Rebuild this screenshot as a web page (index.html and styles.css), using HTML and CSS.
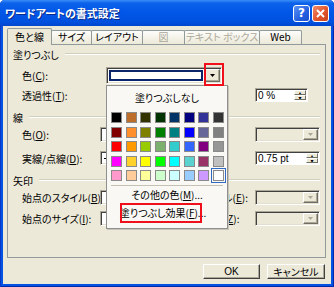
FILE: index.html
```html
<!DOCTYPE html>
<html lang="ja">
<head>
    <meta charset="UTF-8" />
    <title>ワードアートの書式設定</title>
    <link rel="stylesheet" href="styles.css">
</head>
<body>
    <div class="window">
        <div class="titlebar">
            <span class="title">ワードアートの書式設定</span>
            <span class="cap-btn cap-help">?</span>
            <span class="cap-btn cap-close">
                <svg width="9" height="9" viewBox="0 0 9 9"><path d="M1 1L8 8M8 1L1 8" stroke="#fff" stroke-width="2"/></svg>
            </span>
        </div>

        <div class="client">
            <div class="tabs">
                <span class="tab tab-1 active">色と線</span>
                <span class="tab tab-2">サイズ</span>
                <span class="tab tab-3">レイアウト</span>
                <span class="tab tab-4 disabled">図</span>
                <span class="tab tab-5 disabled">テキスト ボックス</span>
                <span class="tab tab-6">Web</span>
            </div>

            <div class="panel">
                <div class="legend legend-first"><span>塗りつぶし</span></div>
                <div class="row row-fill">
                    <span class="label label-fill">色(<u>C</u>):</span>
                    <div class="combo combo-fill">
                        <span class="combo-field focus"></span>
                        <span class="combo-btn"><svg width="5" height="3" viewBox="0 0 5 3"><path d="M0 0h5L2.5 3z"/></svg></span>
                    </div>
                </div>
                <div class="row row-alpha">
                    <span class="label">透過性(<u>T</u>):</span>
                    <div class="right">
                        <span class="right-label"></span>
                        <div class="spin spin-short">
                            <span class="spin-text">0 %</span>
                            <span class="spin-btns"><b>▴</b><b>▾</b></span>
                        </div>
                    </div>
                </div>

                <div class="legend"><span>線</span></div>
                <div class="row">
                    <span class="label">色(<u>O</u>):</span>
                    <div class="combo combo-left"><span class="combo-field"></span></div>
                    <div class="right">
                        <span class="right-label">スタイル(<u>S</u>):</span>
                        <div class="combo combo-off">
                            <span class="combo-field"></span>
                            <span class="combo-btn"><svg width="5" height="3" viewBox="0 0 5 3"><path d="M0 0h5L2.5 3z"/></svg></span>
                        </div>
                    </div>
                </div>
                <div class="row row-dash">
                    <span class="label">実線/点線(<u>D</u>):</span>
                    <div class="combo combo-left"><span class="combo-field line-preview"></span></div>
                    <div class="right">
                        <span class="right-label">太さ(<u>W</u>):</span>
                        <div class="spin">
                            <span class="spin-text">0.75 pt</span>
                            <span class="spin-btns"><b>▴</b><b>▾</b></span>
                        </div>
                    </div>
                </div>

                <div class="legend"><span>矢印</span></div>
                <div class="row">
                    <span class="label">始点のスタイル(<u>B</u>):</span>
                    <div class="combo combo-left"><span class="combo-field"></span></div>
                    <div class="right">
                        <span class="right-label">終点のスタイル(<u>E</u>):</span>
                        <div class="combo combo-off">
                            <span class="combo-field"></span>
                            <span class="combo-btn"><svg width="5" height="3" viewBox="0 0 5 3"><path d="M0 0h5L2.5 3z"/></svg></span>
                        </div>
                    </div>
                </div>
                <div class="row row-last">
                    <span class="label">始点のサイズ(<u>I</u>):</span>
                    <div class="combo combo-left"><span class="combo-field"></span></div>
                    <div class="right">
                        <span class="right-label">終点のサイズ(<u>Z</u>):</span>
                        <div class="combo combo-off">
                            <span class="combo-field"></span>
                            <span class="combo-btn"><svg width="5" height="3" viewBox="0 0 5 3"><path d="M0 0h5L2.5 3z"/></svg></span>
                        </div>
                    </div>
                </div>
            </div>

            <div class="buttons">
                <span class="btn btn-ok">OK</span>
                <span class="btn btn-cancel">キャンセル</span>
            </div>
        </div>

        <!-- colour drop-down, open over the panel -->
        <div class="popup">
            <div class="popup-none">塗りつぶしなし</div>
            <div class="palette">
                <i style="background:#000000"></i>
                <i class="dither" style="background-color:#993300"></i>
                <i style="background:#333300"></i>
                <i style="background:#003300"></i>
                <i style="background:#003366"></i>
                <i style="background:#000080"></i>
                <i style="background:#333399"></i>
                <i style="background:#333333"></i>

                <i style="background:#800000"></i>
                <i class="dither" style="background-color:#FF6600"></i>
                <i style="background:#808000"></i>
                <i style="background:#008000"></i>
                <i style="background:#008080"></i>
                <i style="background:#0000FF"></i>
                <i style="background:#666699"></i>
                <i style="background:#808080"></i>

                <i style="background:#FF0000"></i>
                <i style="background:#FF9900"></i>
                <i style="background:#99CC00"></i>
                <i class="dither" style="background-color:#339966"></i>
                <i style="background:#33CCCC"></i>
                <i style="background:#3366FF"></i>
                <i style="background:#800080"></i>
                <i style="background:#969696"></i>

                <i style="background:#FF00FF"></i>
                <i class="dither" style="background-color:#FFCC00"></i>
                <i style="background:#FFFF00"></i>
                <i style="background:#00FF00"></i>
                <i style="background:#00FFFF"></i>
                <i class="dither" style="background-color:#00CCFF"></i>
                <i style="background:#993366"></i>
                <i style="background:#C0C0C0"></i>

                <i style="background:#FF99CC"></i>
                <i style="background:#FFCC99"></i>
                <i style="background:#FFFF99"></i>
                <i style="background:#CCFFCC"></i>
                <i style="background:#CCFFFF"></i>
                <i style="background:#99CCFF"></i>
                <i style="background:#CC99FF"></i>
                <i class="selected" style="background:#FFFFFF"></i>
            </div>
            <div class="popup-sep"></div>
            <div class="popup-item item-more">その他の色(<u>M</u>)...</div>
            <div class="popup-item item-effects">塗りつぶし効果(<u>F</u>)...</div>
        </div>

        <!-- red highlight marks -->
        <div class="mark mark-arrow"></div>
        <div class="mark mark-effects"></div>
    </div>
</body>
</html>
```

FILE: styles.css
```css
* {
    box-sizing: border-box;
    margin: 0;
    padding: 0;
}

body {
    font-family: "Noto Sans CJK JP", "Noto Sans", sans-serif;
    font-size: 10px;
    font-feature-settings: "palt";
    color: #000;
    background: #fff;
}

u {
    text-decoration: underline;
    text-underline-offset: 1px;
}

.window {
    position: relative;
    width: 334px;
    height: 287px;
    background: #0553E3;
    border-radius: 5px 5px 0 0;
    overflow: hidden;
    box-shadow: inset 1px 0 0 #0838C8, inset -1px 0 0 #0028A8, inset 0 -1px 0 #0028A8;
}

/* title bar */
.titlebar {
    height: 26px;
    display: flex;
    align-items: center;
    padding: 0 5px;
    gap: 2px;
    background: linear-gradient(to bottom, #3A8DF8 0%, #0C62EA 12%, #0257E8 45%, #0050DF 85%, #0045CC 100%);
}

.title {
    margin-right: auto;
    color: #fff;
    font-size: 11px;
    font-weight: bold;
    text-shadow: 1px 1px 0 #0A2A8A;
}

.cap-btn {
    width: 17px;
    height: 17px;
    border: 1px solid #fff;
    border-radius: 3px;
    display: flex;
    align-items: center;
    justify-content: center;
    color: #fff;
}

.cap-help {
    background: linear-gradient(135deg, #5C93F5, #2460E0 60%, #1A4ED0);
    font-family: "DejaVu Sans", sans-serif;
    font-size: 12px;
    font-weight: bold;
}

.cap-close {
    background: linear-gradient(135deg, #F08C6C, #E2552C 55%, #C8411C);
}

/* dialog body */
.client {
    margin: 0 3px;
    height: 258px;
    background: #ECE9D8;
}

.tabs {
    height: 18px;
    display: flex;
    align-items: flex-end;
    padding-left: 4px;
}

.tab {
    height: 14px;
    margin-left: -1px;
    border: 1px solid #919B9C;
    border-bottom: none;
    border-radius: 2px 2px 0 0;
    background: linear-gradient(to bottom, #FDFDFB, #ECE9D8);
    text-align: center;
    line-height: 12px;
    white-space: nowrap;
}

.tab:first-child {
    margin-left: 0;
}

.tab.active {
    position: relative;
    z-index: 1;
    height: 17px;
    margin-bottom: -1px;
    background: #ECE9D8;
    line-height: 15px;
}

.tab.disabled {
    color: #ACA899;
}

.tab-1 { width: 45px; }
.tab-2 { width: 41px; }
.tab-3 { width: 52px; }
.tab-4 { width: 43px; }
.tab-5 { width: 76px; }
.tab-6 { width: 43px; }

.panel {
    width: 319px;
    height: 214px;
    margin-left: 4px;
    border: 1px solid #919B9C;
    padding: 3px 5px 0 5px;
    display: flex;
    flex-direction: column;
}

.legend {
    height: 12px;
    margin-top: 9px;
    display: flex;
    align-items: center;
    color: #000;
}

.legend::after {
    content: "";
    flex: 1;
    margin-left: 6px;
    border-top: 1px solid #D0D0BF;
    border-bottom: 1px solid #fff;
}

.legend-first {
    margin-top: 0;
}

.row {
    height: 15px;
    margin-top: 4px;
    padding-left: 9px;
    display: flex;
    align-items: center;
}

.row-fill {
    height: 17px;
    margin-top: 7px;
}

.row-alpha {
    height: 14px;
}

.row-dash {
    height: 14px;
    margin-top: 9px;
}

.row-last {
    margin-top: 6px;
}

.label {
    width: 78px;
    white-space: nowrap;
}

.label-fill {
    width: 84px;
}

.right {
    margin-left: auto;
    width: 153px;
    height: 100%;
    display: flex;
    align-items: center;
}

.right-label {
    width: 88px;
    white-space: nowrap;
}

/* combo boxes */
.combo {
    height: 100%;
    display: flex;
    border: 1px solid;
    border-color: #ACA899 #fff #fff #ACA899;
    box-shadow: inset 1px 1px 0 #404040, inset -1px -1px 0 #E2DFD0;
    background: #fff;
    padding: 1px;
}

.combo-field {
    flex: 1;
    position: relative;
}

.combo-fill {
    width: 116px;
}

.combo-fill .focus {
    margin: 1px 2px 1px 1px;
    border: 2px solid #0A246A;
    background: #fff;
}

.combo-left {
    width: 60px;
}

.line-preview::after {
    content: "";
    position: absolute;
    left: 2px;
    right: 2px;
    top: 5px;
    border-top: 1px solid #000;
}

.combo-off {
    width: 65px;
    background: #ECE9D8;
}

.combo-btn {
    width: 15px;
    display: flex;
    align-items: center;
    justify-content: center;
    background: #ECE9D8;
    border: 1px solid;
    border-color: #fff #716F64 #716F64 #fff;
    box-shadow: inset -1px -1px 0 #ACA899;
}

.combo-btn svg {
    fill: #000;
}

.combo-off .combo-btn svg {
    fill: #ACA899;
}

/* spinners */
.spin {
    width: 65px;
    height: 100%;
    display: flex;
    border: 1px solid;
    border-color: #ACA899 #fff #fff #ACA899;
    box-shadow: inset 1px 1px 0 #404040;
    background: #fff;
    padding: 1px 1px 1px 2px;
}

.spin-short {
    width: 53px;
}

.spin-text {
    flex: 1;
    line-height: 11px;
    font-family: "Liberation Sans", "Noto Sans CJK JP", sans-serif;
    font-size: 10px;
}

.spin-btns {
    width: 12px;
    display: flex;
    flex-direction: column;
}

.spin-btns b {
    flex: 1;
    display: flex;
    align-items: center;
    justify-content: center;
    font-size: 6px;
    line-height: 1;
    font-weight: normal;
    font-family: "DejaVu Sans", sans-serif;
    background: #ECE9D8;
    border: 1px solid;
    border-color: #fff #716F64 #716F64 #fff;
    overflow: hidden;
}

/* OK / cancel */
.buttons {
    display: flex;
    justify-content: flex-end;
    gap: 7px;
    padding: 6px 6px 0 0;
}

.btn {
    height: 15px;
    display: flex;
    align-items: center;
    justify-content: center;
    border: 1px solid;
    border-color: #fff #404040 #404040 #fff;
    box-shadow: inset -1px -1px 0 #ACA899;
    background: #ECE9D8;
}

.btn-ok {
    width: 57px;
    font-family: "Liberation Sans", sans-serif;
}

.btn-cancel {
    width: 58px;
}

/* colour drop-down */
.popup {
    position: absolute;
    left: 106px;
    top: 85px;
    width: 122px;
    height: 144px;
    background: #F9F8F4;
    border: 1px solid #8E8F8F;
    box-shadow: 1px 1px 0 #C8C5B8;
    padding: 2px 4px 0 4px;
    display: flex;
    flex-direction: column;
}

.popup-none {
    height: 20px;
    line-height: 20px;
    text-align: center;
}

.palette {
    margin-top: 4px;
    display: grid;
    grid-template-columns: repeat(8, 11px);
    grid-auto-rows: 11px;
    gap: 3.5px;
}

.palette i {
    border: 1px solid #8A8A8A;
}

.palette .dither {
    background-image: radial-gradient(circle, rgba(255, 220, 120, 0.55) 0.6px, transparent 0.9px);
    background-size: 2px 2px;
}

.palette .selected {
    outline: 1px solid #316AC5;
    outline-offset: 1px;
}

.popup-sep {
    margin-top: 4px;
    border-top: 1px solid #C5C2B2;
}

.popup-item {
    text-align: center;
    white-space: nowrap;
}

.item-more {
    height: 18px;
    line-height: 18px;
}

.item-effects {
    height: 17px;
    line-height: 17px;
    padding-right: 8px;
}

/* annotation marks */
.mark {
    position: absolute;
    border: 2px solid #F0101C;
}

.mark-arrow {
    left: 204px;
    top: 63px;
    width: 20px;
    height: 23px;
}

.mark-effects {
    left: 120px;
    top: 203px;
    width: 82px;
    height: 20px;
}
```
